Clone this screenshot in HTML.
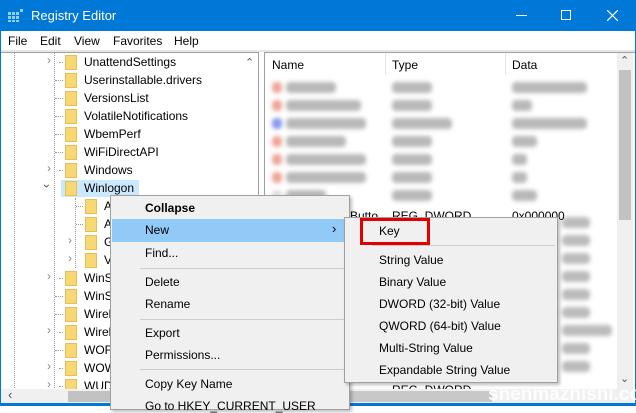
<!DOCTYPE html>
<html><head><meta charset="utf-8"><style>
*{margin:0;padding:0;box-sizing:border-box}
body{width:636px;height:406px;overflow:hidden;background:#fff;font-family:"Liberation Sans",Arial,sans-serif;font-size:12px;color:#000;position:relative}
.a{position:absolute;white-space:nowrap}
.fold{position:absolute;width:12px;height:15px;background:#f8d775;border:1px solid #e6be55}
.blur{position:absolute;height:11px;border-radius:4px;filter:blur(2px)}
.mi{position:absolute;left:145px;font-size:12px}
.si{position:absolute;left:379px;font-size:12px}
.sep{position:absolute;height:1px;background:#ccc}
</style></head><body>
<div class="a" style="left:0;top:0;width:636px;height:31px;background:#0078d7"></div>
<svg class="a" style="left:8px;top:8px" width="16" height="14"><g fill="#8fd0ff"><rect x="0" y="4" width="3" height="3"/><rect x="4" y="4" width="3" height="3"/><rect x="8" y="4" width="3" height="3"/><rect x="0" y="8" width="3" height="3"/><rect x="4" y="8" width="3" height="3"/><rect x="8" y="8" width="3" height="3"/><rect x="0" y="12" width="3" height="2"/><rect x="4" y="12" width="3" height="2"/><rect x="8" y="12" width="3" height="2"/><rect x="12" y="1" width="3" height="3"/></g></svg>
<div class="a" style="left:31px;top:8px;color:#fff;font-size:13px">Registry Editor</div>
<div class="a" style="left:516px;top:15px;width:11px;height:1px;background:#fff"></div>
<div class="a" style="left:561px;top:10px;width:10px;height:10px;border:1px solid #fff"></div>
<svg class="a" style="left:607px;top:10px" width="11" height="11"><path d="M0 0L11 11M11 0L0 11" stroke="#fff" stroke-width="1.2"/></svg>
<div class="a" style="left:0;top:31px;width:1px;height:375px;background:#0078d7"></div>
<div class="a" style="left:635px;top:31px;width:1px;height:375px;background:#0078d7"></div>
<div class="a" style="left:0;top:403px;width:636px;height:3px;background:#0078d7"></div>
<div class="a" style="left:8px;top:34px">File</div>
<div class="a" style="left:40px;top:34px">Edit</div>
<div class="a" style="left:74px;top:34px">View</div>
<div class="a" style="left:113px;top:34px">Favorites</div>
<div class="a" style="left:174px;top:34px">Help</div>
<div class="a" style="left:1px;top:50px;width:634px;height:2px;background:#e6e6e6"></div>
<div class="a" style="left:1px;top:52px;width:258px;height:1px;background:#a0a0a0"></div>
<div class="a" style="left:258px;top:52px;width:1px;height:338px;background:#a0a0a0"></div>
<div class="a" style="left:241px;top:53px;width:17px;height:337px;background:#fff"></div>
<div class="a" style="left:245px;top:56px;color:#555;font-size:11px">&#8963;</div>
<div class="a" style="left:14px;top:53px;width:0;height:337px;border-left:1px dotted #999"></div>
<div class="a" style="left:54px;top:53px;width:0;height:337px;border-left:1px dotted #999"></div>
<div class="a" style="left:75px;top:198px;width:0;height:70px;border-left:1px dotted #999"></div>
<div class="a" style="left:61px;top:180px;width:78px;height:17px;background:#cce8ff"></div>
<div id="tree"></div>
<script>
var rows=[["UnattendSettings",1],["Userinstallable.drivers",0],["VersionsList",0],["VolatileNotifications",0],["WbemPerf",0],["WiFiDirectAPI",0],["Windows",1],["Winlogon",2]];
var h="";rows.forEach(function(r,i){var y=54+i*18;
 if(r[1]==1)h+='<div class="a" style="left:47px;top:'+(y-1)+'px;color:#888;font-size:12px">&#8250;</div><div class="a" style="left:59px;top:'+(y+8)+'px;width:4px;border-top:1px dotted #999"></div>';
 else if(r[1]==2)h+='<div class="a" style="left:45px;top:'+(y-1)+'px;color:#444;font-size:12px;transform:rotate(90deg)">&#8250;</div>';
 else h+='<div class="a" style="left:55px;top:'+(y+8)+'px;width:8px;border-top:1px dotted #999"></div>';
 h+='<div class="fold" style="left:65px;top:'+(y+1)+'px"></div><div class="a" style="left:84px;top:'+(y+1)+'px">'+r[0]+'</div>';});
["A","A","G","V"].forEach(function(t,i){var y=198+i*18;
 if(i>1)h+='<div class="a" style="left:68px;top:'+(y-1)+'px;color:#888">&#8250;</div>';
 else h+='<div class="a" style="left:76px;top:'+(y+8)+'px;width:7px;border-top:1px dotted #999"></div>';
 h+='<div class="fold" style="left:85px;top:'+(y+1)+'px"></div><div class="a" style="left:104px;top:'+(y+1)+'px">'+t+'</div>';});
[["WinS",1],["WinS",0],["Wirel",0],["Wirel",1],["WOF",0],["WOW",1],["WUD",1]].forEach(function(r,i){var y=270+i*18;
 if(r[1])h+='<div class="a" style="left:47px;top:'+(y-1)+'px;color:#888">&#8250;</div><div class="a" style="left:59px;top:'+(y+8)+'px;width:4px;border-top:1px dotted #999"></div>';
 else h+='<div class="a" style="left:55px;top:'+(y+8)+'px;width:8px;border-top:1px dotted #999"></div>';
 h+='<div class="fold" style="left:65px;top:'+(y+1)+'px"></div><div class="a" style="left:84px;top:'+(y+1)+'px">'+r[0]+'</div>';});
document.getElementById("tree").innerHTML=h;
</script>
<div class="a" style="left:264px;top:52px;width:371px;height:1px;background:#a0a0a0"></div>
<div class="a" style="left:264px;top:52px;width:1px;height:338px;background:#a0a0a0"></div>
<div class="a" style="left:272px;top:58px">Name</div>
<div class="a" style="left:392px;top:58px">Type</div>
<div class="a" style="left:512px;top:58px">Data</div>
<div class="a" style="left:385px;top:53px;width:1px;height:22px;background:#e5e5e5"></div>
<div class="a" style="left:505px;top:53px;width:1px;height:22px;background:#e5e5e5"></div>
<div id="rp"></div>
<script>
var h="",w=[[50,40,75],[75,40,20],[80,60,75],[60,40,25],[80,40,15],[80,40,15],[40,40,25]];
w.forEach(function(r,i){var y=82+i*18;
 h+='<div class="blur" style="left:272px;top:'+y+'px;width:10px;background:'+(i==2?'#8898ee':(i==6?'#ddd':'#eea498'))+'"></div>';
 h+='<div class="blur" style="left:286px;top:'+y+'px;width:'+r[0]+'px;background:#b8b8b8"></div>';
 h+='<div class="blur" style="left:392px;top:'+y+'px;width:'+r[1]+'px;background:#b8b8b8"></div>';
 h+='<div class="blur" style="left:512px;top:'+y+'px;width:'+r[2]+'px;background:#b8b8b8"></div>';});
for(var i=0;i<9;i++)h+='<div class="blur" style="left:562px;top:'+(217+i*18)+'px;width:'+(i==6?50:28)+'px;background:#bbb"></div>';
document.getElementById("rp").innerHTML=h;
</script>
<div class="a" style="left:350px;top:209px;font-size:12px">Butto</div>
<div class="a" style="left:392px;top:209px">REG_DWORD</div>
<div class="a" style="left:512px;top:209px">0x000000</div>
<div class="a" style="left:392px;top:383px">REG_DWORD</div>
<div class="a" style="left:617px;top:53px;width:16px;height:337px;background:#f0f0f0"></div>
<div class="a" style="left:619px;top:70px;width:12px;height:150px;background:#c2c2c2"></div>
<div class="a" style="left:620px;top:54px;color:#555;font-size:11px">&#8963;</div>
<div class="a" style="left:620px;top:372px;color:#555;font-size:11px">&#8964;</div>
<div class="a" style="left:1px;top:389px;width:258px;height:14px;background:#f0f0f0"></div>
<div class="a" style="left:68px;top:391px;width:50px;height:11px;background:#c2c2c2"></div>
<div class="a" style="left:8px;top:387px;color:#555;font-size:13px">&#8249;</div>
<div class="a" style="left:264px;top:389px;width:353px;height:14px;background:#f0f0f0"></div>
<div class="a" style="left:280px;top:391px;width:212px;height:11px;background:#c8c8c8"></div>
<div class="a" style="left:617px;top:389px;width:16px;height:14px;background:#f0f0f0"></div>
<div class="a" style="left:488px;top:384px;color:rgba(255,255,255,0.85);font-size:19px;font-weight:bold">shenmazhishi.com</div>
<div class="a" style="left:110px;top:195px;width:240px;height:215px;background:#f0f0f0;border:1px solid #a0a0a0;box-shadow:2px 2px 3px rgba(0,0,0,.25)"></div>
<div class="mi" style="top:201px;font-weight:bold">Collapse</div>
<div class="a" style="left:112px;top:219px;width:237px;height:23px;background:#91c9f7"></div>
<div class="mi" style="top:223px">New</div>
<div class="a" style="left:332px;top:221px;font-size:13px">&#8250;</div>
<div class="mi" style="top:246px">Find...</div>
<div class="sep" style="left:140px;top:268px;width:206px"></div>
<div class="mi" style="top:275px">Delete</div>
<div class="mi" style="top:297px">Rename</div>
<div class="sep" style="left:140px;top:319px;width:206px"></div>
<div class="mi" style="top:326px">Export</div>
<div class="mi" style="top:348px">Permissions...</div>
<div class="sep" style="left:140px;top:369px;width:206px"></div>
<div class="mi" style="top:377px">Copy Key Name</div>
<div class="mi" style="top:399px">Go to HKEY_CURRENT_USER</div>
<div class="a" style="left:344px;top:217px;width:214px;height:166px;background:#f0f0f0;border:1px solid #a0a0a0;box-shadow:2px 2px 3px rgba(0,0,0,.25)"></div>
<div class="a" style="left:360px;top:218px;width:70px;height:27px;border:3px solid #e00000"></div>
<div class="si" style="top:224px">Key</div>
<div class="sep" style="left:372px;top:245px;width:183px"></div>
<div class="si" style="top:253px">String Value</div>
<div class="si" style="top:275px">Binary Value</div>
<div class="si" style="top:297px">DWORD (32-bit) Value</div>
<div class="si" style="top:319px">QWORD (64-bit) Value</div>
<div class="si" style="top:341px">Multi-String Value</div>
<div class="si" style="top:363px">Expandable String Value</div>
</body></html>
